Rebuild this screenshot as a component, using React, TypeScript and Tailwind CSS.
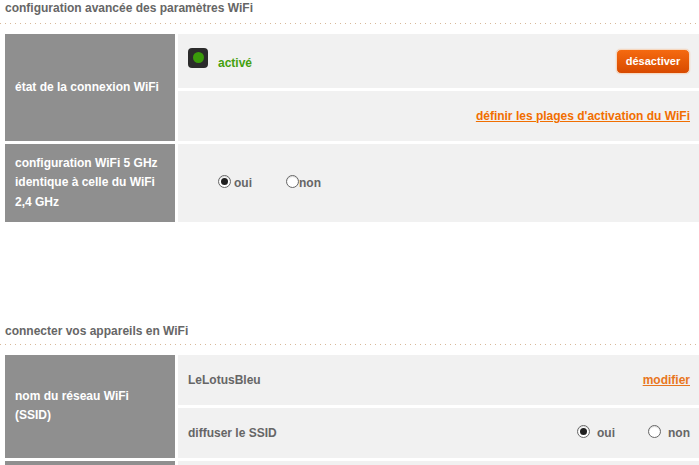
function Radio({ checked, className }: { checked?: boolean; className?: string }) {
  return (
    <span className={`w-[13px] h-[13px] rounded-full border border-[#666] bg-white flex items-center justify-center shrink-0 shadow-[inset_0_1px_1px_rgba(0,0,0,0.15)] ${className ?? ''}`}>
      {checked && <span className="w-[7px] h-[7px] rounded-full bg-[#1f1f1f]" />}
    </span>
  );
}

function SectionTitle({ children, className }: { children: string; className?: string }) {
  return (
    <div className={`relative pl-[5px] pt-[1px] text-[12px] leading-[14px] font-bold text-[#666] ${className ?? ''}`}>
      {children}
      {/* dotted rule, dots are wider apart than a css dotted border */}
      <div className="absolute left-0 right-0 bottom-0 h-px bg-[repeating-linear-gradient(90deg,#d8b898_0_1px,transparent_1px_5px)]" />
    </div>
  );
}

function Head({ children }: { children: React.ReactNode }) {
  return (
    <div className="w-[170px] shrink-0 bg-[#8f8f8f] flex items-center pl-[10px] pr-1 text-[12px] leading-[19.5px] font-bold text-white">
      <div>{children}</div>
    </div>
  );
}

export default function App() {
  return (
    <div className="w-[699px] h-[465px] overflow-hidden bg-white font-['Liberation_Sans',Arial,sans-serif]">
      <SectionTitle className="h-[24px]">configuration avancée des paramètres WiFi</SectionTitle>

      {/* etat */}
      <div className="mt-[10px] pl-[5px] flex flex-col gap-[3px]">
        <div className="flex gap-[3px] h-[107px]">
          <Head>état de la connexion WiFi</Head>
          <div className="flex-1 flex flex-col gap-[3px]">
            <div className="h-[54px] bg-[#f1f1f1] flex items-center pl-[10px] pr-[9px]">
              <span className="w-5 h-5 rounded-[4px] bg-[#2b2b2b] flex items-center justify-center -mt-[7px]">
                <span className="w-[11px] h-[11px] rounded-full bg-[#3a9a0a]" />
              </span>
              <span className="ml-[10px] mt-[3px] text-[12px] font-bold text-[#43a00e]">activé</span>
              <button className="ml-auto w-[74px] h-[25px] rounded-[5px] border border-[#f6d8c0] bg-gradient-to-b from-[#f56a10] to-[#d84a00] text-white text-[11px] font-bold shadow-[0_0_1px_#e8a070]">
                désactiver
              </button>
            </div>
            <div className="flex-1 bg-[#f1f1f1] flex items-center justify-end pr-[9px]">
              <a className="text-[12px] font-bold text-[#f16e00] underline">définir les plages d'activation du WiFi</a>
            </div>
          </div>
        </div>

        <div className="flex gap-[3px] h-[78px]">
          <Head>
            configuration WiFi 5 GHz
            <br />
            identique à celle du WiFi
            <br />
            2,4 GHz
          </Head>
          <div className="flex-1 bg-[#f1f1f1] flex items-center pl-[40px] text-[12px] font-bold text-[#666]">
            <span className="flex items-center gap-[3px]">
              <Radio checked className="-mt-[3px]" />
              <span>oui</span>
            </span>
            <span className="flex items-center ml-[34px]">
              <Radio className="-mt-[3px]" />
              <span>non</span>
            </span>
          </div>
        </div>
      </div>

      {/* connecter */}
      <div className="mt-[101px]">
        <SectionTitle className="h-[22px]">connecter vos appareils en WiFi</SectionTitle>
      </div>

      <div className="mt-[10px] pl-[5px] flex flex-col gap-[3px]">
        <div className="flex gap-[3px] h-[103px]">
          <Head>
            <div className="-mt-[1px]">
              nom du réseau WiFi
              <br />
              (SSID)
            </div>
          </Head>
          <div className="flex-1 flex flex-col gap-[3px] text-[12px] font-bold text-[#666]">
            <div className="h-[50px] bg-[#f1f1f1] flex items-center justify-between pl-[10px] pr-[9px]">
              <span className="-mt-[1px]">LeLotusBleu</span>
              <a className="text-[#e8761e] underline -mt-[1px]">modifier</a>
            </div>
            <div className="flex-1 bg-[#f1f1f1] flex items-center pl-[10px] pr-[9px]">
              <span>diffuser le SSID</span>
              <span className="ml-auto flex items-center gap-[7px]">
                <Radio checked className="-mt-[3px]" />
                <span>oui</span>
              </span>
              <span className="ml-[33px] flex items-center gap-[7px]">
                <Radio className="-mt-[3px]" />
                <span>non</span>
              </span>
            </div>
          </div>
        </div>
        <div className="flex gap-[3px] h-[40px]">
          <Head>{''}</Head>
          <div className="flex-1 bg-[#f1f1f1]" />
        </div>
      </div>
    </div>
  );
}
